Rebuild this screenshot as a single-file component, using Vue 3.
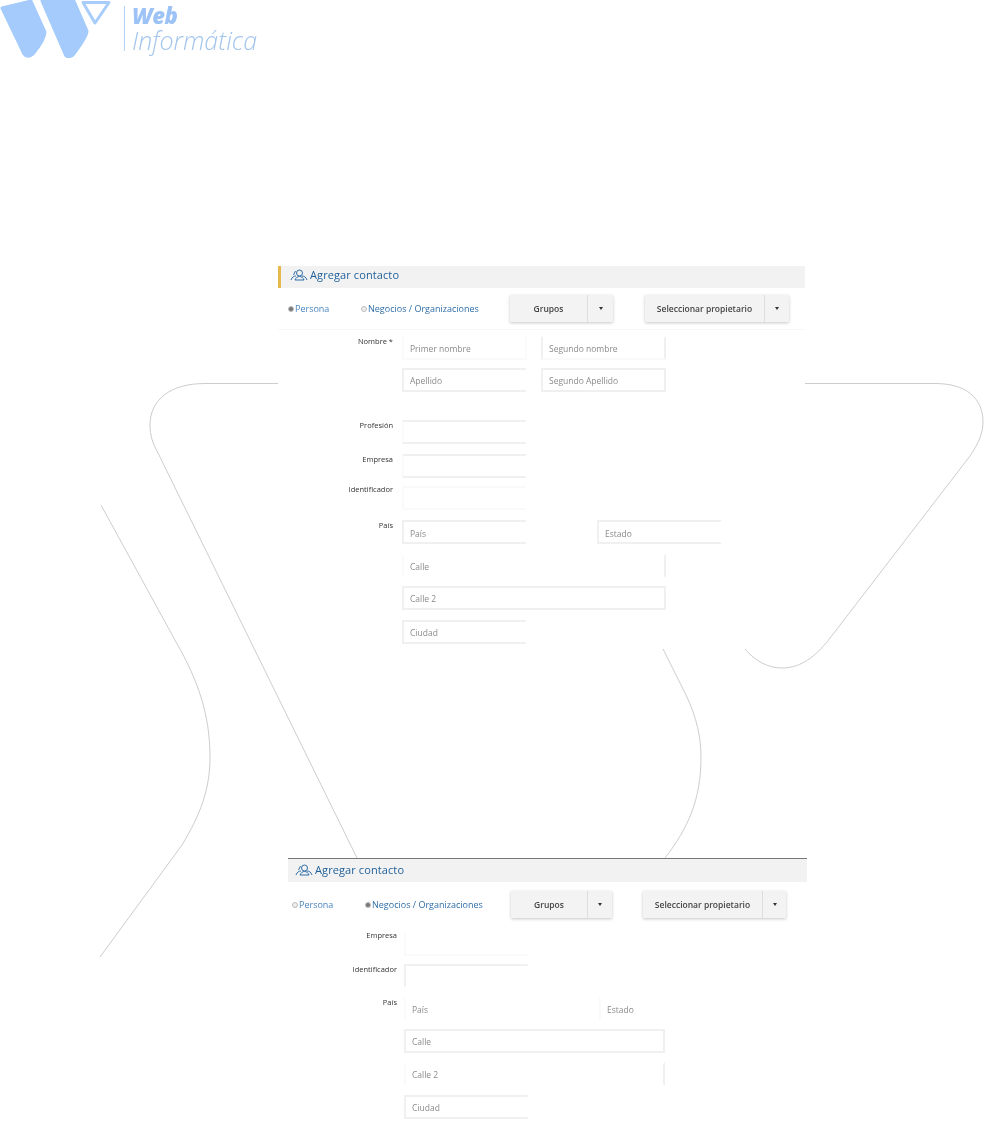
<script setup>
const panels = [
  {
    id: 'one',
    radios: [
      { text: 'Persona', on: true, cls: 'first' },
      { text: 'Negocios / Organizaciones', on: false, cls: 'second' }
    ],
    rows: [
      { label: 'Nombre *', fields: [{ text: 'Primer nombre', cls: 'std faint no-top' }, { text: 'Segundo nombre', cls: 'std no-top faint-b' }], cls: 'split-near' },
      { label: '', fields: [{ text: 'Apellido', cls: 'std no-right' }, { text: 'Segundo Apellido', cls: 'std' }], cls: 'split-near' },
      { label: 'Profesión', fields: [{ text: '', cls: 'std no-right faint-l' }], cls: 'after-gap' },
      { label: 'Empresa', fields: [{ text: '', cls: 'std no-right faint-l' }], cls: 'plus' },
      { label: 'Identificador', fields: [{ text: '', cls: 'std faint no-right' }], cls: 'lift' },
      { label: 'País', fields: [{ text: 'País', cls: 'std no-right low' }, { text: 'Estado', cls: 'std no-right low' }], cls: 'split-far plus' },
      { label: '', fields: [{ text: 'Calle', cls: 'wide no-top no-bottom faint-l' }], cls: 'plus' },
      { label: '', fields: [{ text: 'Calle 2', cls: 'wide' }], cls: '' },
      { label: '', fields: [{ text: 'Ciudad', cls: 'std no-right' }], cls: 'plus' }
    ]
  },
  {
    id: 'two',
    radios: [
      { text: 'Persona', on: false, cls: 'first' },
      { text: 'Negocios / Organizaciones', on: true, cls: 'second' }
    ],
    rows: [
      { label: 'Empresa', fields: [{ text: '', cls: 'std faint no-top no-right' }], cls: 'lift' },
      { label: 'Identificador', fields: [{ text: '', cls: 'std no-right no-bottom' }], cls: '' },
      { label: 'País', fields: [{ text: 'País', cls: 'std faint no-top no-bottom no-right' }, { text: 'Estado', cls: 'std faint no-top no-bottom no-right' }], cls: 'split-far plus' },
      { label: '', fields: [{ text: 'Calle', cls: 'wide' }], cls: '' },
      { label: '', fields: [{ text: 'Calle 2', cls: 'wide no-top no-bottom faint-l' }], cls: 'plus' },
      { label: '', fields: [{ text: 'Ciudad', cls: 'std no-right' }], cls: 'plus' }
    ]
  }
]
</script>

<template>
  <div class="canvas">
    <svg class="lines" width="984" height="1128" viewBox="0 0 984 1128" fill="none">
      <path d="M278 383.5H205C170 383.5 150 400 150 425C150 436 153 444 158 453L357 858" />
      <path d="M101 505L176 642C198 680 210 715 210 757C210 790 200 815 182 845L100 957" />
      <path d="M805 383.5H935C966 383.5 983 398 983 422C983 434 978 444 970 456L827 642C812 660 798 668 782 668C768 668 755 661 745 649" />
      <path d="M663 649L686 695C697 718 701 738 701 757C701 800 688 828 665 858" />
    </svg>

    <header class="logo">
      <svg class="logo-mark" width="112" height="58" viewBox="0 0 112 58">
        <path class="logo-fill" d="M2 8L31 1L45 32C45 38 38 48 33 54C29 57 26 57 24 54Z" />
        <path class="logo-fill" d="M42 1H74L87 31C87 37 79 47 73 55C69 58 66 57 65 54Z" />
        <path class="logo-tri" d="M83 2.500H109L95 23Z" />
      </svg>
      <div class="logo-bar"></div>
      <div class="logo-text">
        <span class="logo-web">Web</span>
        <span class="logo-inf">Informática</span>
      </div>
    </header>

    <section v-for="p in panels" :key="p.id" class="panel" :class="p.id">
      <div class="head">
        <svg class="head-icon" width="18" height="12" viewBox="0 0 18 12" fill="none">
          <circle cx="9.500" cy="4" r="3" />
          <path d="M1 11C2 8 4 7 6 7M17 11C16 8 14 7 12 7M5 11C6 8.500 7.500 7.500 9.500 7.500S13 8.500 14 11ZM3.500 6L5.500 2" />
        </svg>
        <h2 class="title">Agregar contacto</h2>
      </div>

      <div class="bar">
        <label v-for="r in p.radios" :key="r.text" class="radio" :class="r.cls">
          <i class="dot" :class="{ on: r.on }"></i>{{ r.text }}
        </label>
        <div class="btn-group groups">
          <button class="btn main" type="button">Grupos</button>
          <button class="btn caret" type="button"><i></i></button>
        </div>
        <div class="btn-group owner">
          <button class="btn main" type="button">Seleccionar propietario</button>
          <button class="btn caret" type="button"><i></i></button>
        </div>
      </div>

      <div class="form">
        <div v-for="(row, i) in p.rows" :key="i" class="row" :class="row.cls">
          <span class="label">{{ row.label }}</span>
          <div class="fields">
            <div v-for="f in row.fields" :key="f.text + i" class="field" :class="f.cls">{{ f.text }}</div>
          </div>
        </div>
      </div>
    </section>
  </div>
</template>

<style>
html, body { margin: 0; background: #fff; }
</style>

<style scoped>
.canvas {
  position: relative;
  width: 984px;
  height: 1128px;
  overflow: hidden;
  background: #fff;
  font-family: "Open Sans", "Liberation Sans", sans-serif;
}
.lines { position: absolute; left: 0; top: 0; }
.lines path { stroke: #cdcdcd; stroke-width: 1; }

.logo {
  position: absolute;
  left: 0;
  top: 0;
  display: flex;
  align-items: flex-start;
  filter: blur(.6px);
}
.logo-mark { display: block; }
.logo-fill { fill: #a4cbfb; stroke: #a4cbfb; stroke-width: 3; stroke-linejoin: round; }
.logo-tri { fill: none; stroke: #a9cdfb; stroke-width: 3; stroke-linejoin: round; }
.logo-bar { width: 1px; height: 45px; margin: 6px 0 0 12px; background: #b5d2f5; }
.logo-text { display: flex; flex-direction: column; gap: 1px; margin: 4px 0 0 7px; font-style: italic; }
.logo-web { font-size: 22px; line-height: 23px; font-weight: 800; color: #9dc3f6; letter-spacing: -.4px; }
.logo-inf { font-size: 25px; line-height: 25px; font-weight: 300; color: #a3c5ec; }

.panel { position: absolute; filter: blur(.6px); }
.panel.one { left: 278px; top: 266px; width: 527px; }
.panel.two { left: 288px; top: 858px; width: 519px; border-top: 1px solid #777; }

.head { box-sizing: border-box; display: flex; align-items: center; height: 22px; background: #f2f2f2; }
.one .head { padding: 0 0 5px 9px; border-left: 3px solid #e6b94d; }
.two .head { padding: 0 0 2px 7px; height: 23px; }
.head-icon { margin: 0 2px 0 0; flex: none; }
.head-icon circle, .head-icon path { stroke: #2f6ea8; stroke-width: 1; }
.title { margin: 0; font-size: 11px; line-height: 16px; font-weight: 500; color: #1f5f99; letter-spacing: .1px; }

.bar { display: flex; align-items: center; height: 41px; }
.one .bar { border-bottom: 1px solid #f7f7f7; padding-left: 10px; }
.two .bar { padding: 1px 0 0 4px; height: 43px; }
.radio { display: flex; align-items: center; font-size: 9px; color: #4a86bd; white-space: nowrap; }
.radio.first { width: 73px; }
.radio.second { width: 149px; color: #2f6ea8; }
.two .radio.second { width: 146px; }
.dot { width: 6px; height: 6px; margin-right: 1px; border: 1px solid #bbb; border-radius: 50%; box-sizing: border-box; background: #eee; }
.dot.on { background: #777; }

.btn-group { display: flex; height: 27px; box-shadow: 0 1px 3px rgba(0, 0, 0, .22); }
.one .owner { margin-left: 32px; }
.two .owner { margin-left: 31px; }
.btn {
  height: 27px;
  padding: 0;
  border: 0;
  background: #f3f3f3;
  font-family: inherit;
  font-size: 8.500px;
  font-weight: 600;
  color: #444;
}
.btn.caret { display: flex; align-items: center; justify-content: center; border-left: 1px solid #ddd; }
.btn.caret i { width: 0; height: 0; border: 2px solid transparent; border-top: 3px solid #333; border-bottom: 0; }
.one .groups .main { width: 77px; }
.one .groups .caret { width: 26px; }
.one .owner .main { width: 119px; }
.one .owner .caret { width: 25px; }
.two .groups .main { width: 76px; }
.two .groups .caret { width: 25px; }
.two .owner .main { width: 119px; }
.two .owner .caret { width: 24px; }

.form { display: flex; flex-direction: column; gap: 8px; }
.one .form { padding-top: 6px; }
.two .form { padding-top: 6px; }
.row { display: flex; align-items: flex-start; }
.row.after-gap { margin-top: 20px; }
.row.plus { margin-top: 2px; }
.two .row.plus { margin-top: 1px; }
.label {
  flex: none;
  text-align: right;
  font-size: 7.500px;
  line-height: 10px;
  font-weight: 500;
  color: #333;
}
.lift .label { margin-top: -2px; }
.one .label { width: 115px; margin-right: 9px; }
.two .label { width: 109px; margin-right: 7px; }
.fields { display: flex; }
.split-near .fields { gap: 14px; }
.split-far .fields { gap: 70px; }

.field {
  box-sizing: border-box;
  height: 24px;
  padding-left: 6px;
  border: 2px solid #f0f0f0;
  background: #fff;
  font-size: 8.500px;
  line-height: 22px;
  color: #8b8b8b;
}
.low { line-height: 23px; }
.std { width: 125px; }
.wide { width: 264px; }
.two .wide { width: 261px; }
.faint { border-color: #fafafa; }
.faint-l { border-left-color: #fafafa; }
.faint-b { border-bottom-color: #fafafa; }
.no-top { border-top-color: transparent; }
.no-right { border-right-color: transparent; }
.no-bottom { border-bottom-color: transparent; }
</style>
